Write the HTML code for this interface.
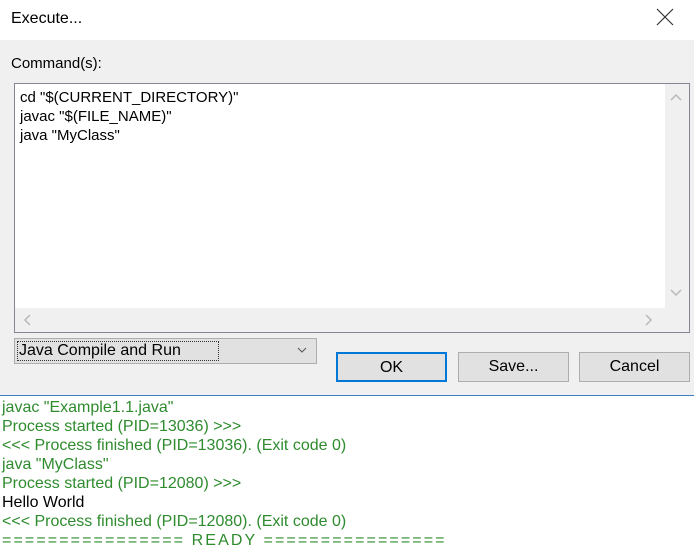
<!DOCTYPE html>
<html><head><meta charset="utf-8"><style>
*{margin:0;padding:0;box-sizing:border-box}
body{width:694px;height:551px;background:#fff;font-family:"Liberation Sans",sans-serif;position:relative;overflow:hidden;color:#000}
.a{position:absolute}
.dlg{left:0;top:0;width:694px;height:396px;background:#f0f0f0;border-bottom:1px solid #3c7fc4}
.title{left:0;top:0;width:694px;height:40px;background:#fff}
.t{font-size:15px;white-space:nowrap}
.ta{left:14px;top:83px;width:676px;height:250px;border:1px solid #828790;background:#fff}
.btn{height:30px;width:111px;border:1px solid #adadad;background:#e1e1e1;text-align:center;line-height:28px;font-size:15px}
.out{left:2px;font-size:16px;color:#2e8b2e;white-space:nowrap;line-height:19px}
</style></head><body>
<div class="a dlg"></div>
<div class="a title"></div>
<div class="a t" style="left:11px;top:10px;font-size:16px">Execute...</div>
<svg class="a" style="left:656px;top:8px" width="18" height="18"><path d="M1 1L17 17M17 1L1 17" stroke="#333" stroke-width="1.2"/></svg>
<div class="a t" style="left:11px;top:55px">Command(s):</div>
<div class="a ta"></div>
<div class="a" style="left:665px;top:84px;width:24px;height:224px;background:#f0f0f0"></div>
<div class="a" style="left:15px;top:308px;width:674px;height:24px;background:#f0f0f0"></div>
<svg class="a" style="left:669px;top:92px" width="14" height="10"><path d="M2 8L7 3L12 8" stroke="#b8b8b8" stroke-width="1.5" fill="none"/></svg>
<svg class="a" style="left:669px;top:288px" width="14" height="10"><path d="M2 2L7 7L12 2" stroke="#b8b8b8" stroke-width="1.5" fill="none"/></svg>
<svg class="a" style="left:22px;top:313px" width="10" height="14"><path d="M8 2L3 7L8 12" stroke="#b8b8b8" stroke-width="1.5" fill="none"/></svg>
<svg class="a" style="left:644px;top:313px" width="10" height="14"><path d="M2 2L7 7L2 12" stroke="#b8b8b8" stroke-width="1.5" fill="none"/></svg>
<div class="a t" style="left:20px;top:88px;line-height:19px">cd "$(CURRENT_DIRECTORY)"<br>javac "$(FILE_NAME)"<br>java "MyClass"</div>
<div class="a" style="left:14px;top:338px;width:303px;height:26px;border:1px solid #adadad;background:#e1e1e1"></div>
<div class="a" style="left:17px;top:341px;width:202px;height:20px;border:1px dotted #333"></div>
<div class="a t" style="left:19px;top:342px;font-size:16px">Java Compile and Run</div>
<svg class="a" style="left:297px;top:346px" width="10" height="8"><path d="M1 2L5 6L9 2" stroke="#555" fill="none"/></svg>
<div class="a btn" style="left:336px;top:352px;border:2px solid #0078d7;font-size:16px">OK</div>
<div class="a btn" style="left:458px;top:352px;font-size:16px">Save...</div>
<div class="a btn" style="left:579px;top:352px;font-size:16px">Cancel</div>
<div class="a out" style="top:398px">javac "Example1.1.java"<br>Process started (PID=13036) &gt;&gt;&gt;<br>&lt;&lt;&lt; Process finished (PID=13036). (Exit code 0)<br>java "MyClass"<br>Process started (PID=12080) &gt;&gt;&gt;<br><span style="color:#000">Hello World</span><br>&lt;&lt;&lt; Process finished (PID=12080). (Exit code 0)<br><span style="letter-spacing:2.1px">================ READY ================</span></div>
</body></html>
